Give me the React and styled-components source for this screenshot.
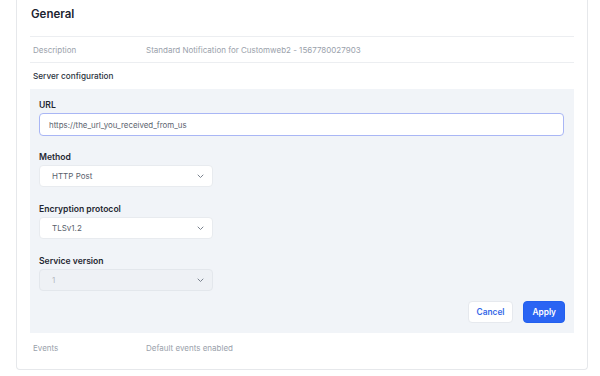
import React from "react";
import styled, { createGlobalStyle } from "styled-components";

const Global = createGlobalStyle`
  html, body { margin: 0; padding: 0; background: #ffffff; }
  body { font-family: Inter, "Noto Sans", sans-serif; -webkit-font-smoothing: antialiased; }
  * { box-sizing: border-box; }
`;

const Page = styled.div`
  padding: 0 12px 0 16px;
  width: 600px;
  height: 376px;
  overflow: hidden;
`;

const Card = styled.section`
  border: 1px solid #e6e8eb;
  border-top: none;
  border-radius: 0 0 4px 4px;
  padding: 0 13px 7px 13px;
  background: #fff;
`;

const Title = styled.h2`
  margin: 0;
  height: 37px;
  display: flex;
  align-items: center;
  padding: 0 0 8px 1px;
  font-size: 11.5px;
  font-weight: 600;
  color: #1c2430;
  border-bottom: 1px solid #eceef1;
`;

const InfoRow = styled.div`
  display: grid;
  grid-template-columns: 113px 1fr;
  align-items: center;
  height: ${(p) => p.$h || 26}px;
  padding-left: 3px;
  font-size: 8px;
  color: #9aa1ab;
  border-bottom: ${(p) => (p.$last ? "none" : "1px solid #eceef1")};
`;

const SectionTitle = styled.div`
  height: 26px;
  display: flex;
  align-items: center;
  padding-left: 3px;
  font-size: 8.2px;
  font-weight: 500;
  color: #2a323d;
`;

const Panel = styled.div`
  background: #f1f4f8;
  padding: 10px 10px 10px 9px;
  display: flex;
  flex-direction: column;
`;

const Field = styled.div`
  display: flex;
  flex-direction: column;
  gap: 2px;
  margin-bottom: ${(p) => p.$mb}px;
`;

const Label = styled.label`
  font-size: 8.6px;
  font-weight: 600;
  color: #1f2732;
  line-height: 12px;
`;

const TextInput = styled.input`
  height: 23px;
  width: 100%;
  border: 1px solid #a9b6f5;
  border-radius: 4px;
  background: #fff;
  padding: 0 9px;
  font-family: inherit;
  font-size: 7.9px;
  color: #5b636e;
  outline: none;
`;

const SelectBox = styled.div`
  height: 22px;
  width: 174px;
  border: 1px solid ${(p) => (p.$disabled ? "#e3e7ec" : "#e8ebef")};
  border-radius: 4px;
  background: ${(p) => (p.$disabled ? "#eef1f5" : "#fff")};
  display: flex;
  align-items: center;
  justify-content: space-between;
  padding: 0 8px 0 12px;
  font-size: 8px;
  color: ${(p) => (p.$disabled ? "#b3b9c2" : "#59616c")};
`;

const Chevron = styled.svg`
  width: 7px;
  height: 5px;
`;

const Actions = styled.div`
  display: flex;
  justify-content: flex-end;
  gap: 10px;
  margin-right: -1px;
`;

const Button = styled.button`
  height: 22px;
  padding: 0 8px;
  border-radius: 4px;
  font-family: inherit;
  font-size: 8.3px;
  font-weight: 600;
  border: 1px solid ${(p) => (p.$primary ? "#2260ee" : "#e6e9ee")};
  background: ${(p) => (p.$primary ? "#2a64f3" : "#fff")};
  color: ${(p) => (p.$primary ? "#fff" : "#3567e8")};
`;

const Select = ({ value, disabled }) => (
  <SelectBox $disabled={disabled}>
    <span>{value}</span>
    <Chevron viewBox="0 0 7 5" fill="none">
      <path d="M1 1l2.5 2.5L6 1" stroke="#7a828e" strokeWidth="1" strokeLinecap="round" strokeLinejoin="round" />
    </Chevron>
  </SelectBox>
);

export default function App() {
  return (
    <Page>
      <Global />
      <Card>
        <Title>General</Title>
        <InfoRow>
          <span>Description</span>
          <span>Standard Notification for Customweb2 - 1567780027903</span>
        </InfoRow>
        <SectionTitle>Server configuration</SectionTitle>
        <Panel>
          <Field $mb={15}>
            <Label>URL</Label>
            <TextInput defaultValue="https://the_url_you_received_from_us" />
          </Field>
          <Field $mb={16}>
            <Label>Method</Label>
            <Select value="HTTP Post" />
          </Field>
          <Field $mb={16}>
            <Label>Encryption protocol</Label>
            <Select value="TLSv1.2" />
          </Field>
          <Field $mb={10}>
            <Label>Service version</Label>
            <Select value="1" disabled />
          </Field>
          <Actions>
            <Button>Cancel</Button>
            <Button $primary>Apply</Button>
          </Actions>
        </Panel>
        <InfoRow $last $h={29}>
          <span>Events</span>
          <span>Default events enabled</span>
        </InfoRow>
      </Card>
    </Page>
  );
}
